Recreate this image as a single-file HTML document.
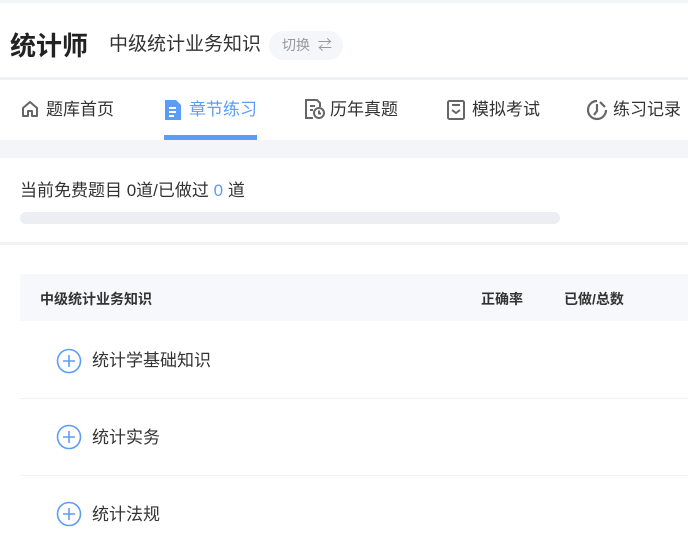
<!DOCTYPE html>
<html><head><meta charset="utf-8"><style>
*{margin:0;padding:0;box-sizing:border-box}
body{width:688px;height:542px;overflow:hidden;background:#fff;font-family:"Liberation Sans","Noto Sans CJK SC",sans-serif;color:#333;position:relative}
.a{position:absolute;white-space:nowrap}
</style></head><body>
<div class="a" style="left:0;top:0;width:688px;height:3px;background:#f4f5f8"></div>
<div class="a" style="left:10px;top:28px;font-size:26px;font-weight:bold;color:#222;line-height:36px">统计师</div>
<div class="a" style="left:109px;top:32px;font-size:19px;color:#333;line-height:26px">中级统计业务知识</div>
<div class="a" style="left:269px;top:31px;width:74px;height:29px;border-radius:15px;background:#f5f6fa;font-size:14px;color:#999;line-height:29px;padding-left:13px">切换 <span style="margin-left:4px">⇄</span></div>
<div class="a" style="left:0;top:77px;width:688px;height:3px;background:#f1f2f6"></div>
<svg class="a" style="left:20px;top:99px" width="20" height="20" viewBox="0 0 20 20" fill="none" stroke="#666" stroke-width="2"><path d="M3 9 L10 3 L17 9 V17 H12 V12 H8 V17 H3 Z" stroke-linejoin="round"/></svg>
<div class="a" style="left:46px;top:98px;font-size:17px;color:#333;line-height:24px">题库首页</div>
<svg class="a" style="left:163px;top:99px" width="20" height="22" viewBox="0 0 20 22"><path d="M2 1 H13 L18 6 V21 H2 Z" fill="#5b9cf7"/><path d="M6 9h7M6 13h7M6 17h5" stroke="#fff" stroke-width="2"/></svg>
<div class="a" style="left:189px;top:98px;font-size:17px;color:#5b9cf7;line-height:24px">章节练习</div>
<div class="a" style="left:164px;top:135px;width:93px;height:5px;background:#5b9cf7"></div>
<svg class="a" style="left:304px;top:98px" width="22" height="22" viewBox="0 0 22 22" fill="none" stroke="#666" stroke-width="2"><path d="M9 20 H2 V2 H13 L16 5 V9"/><path d="M6 8h5M6 12h3"/><circle cx="15" cy="15" r="5"/><path d="M15 12.5v3h2"/></svg>
<div class="a" style="left:330px;top:98px;font-size:17px;color:#333;line-height:24px">历年真题</div>
<svg class="a" style="left:446px;top:99px" width="20" height="22" viewBox="0 0 20 22" fill="none" stroke="#666" stroke-width="2"><rect x="2" y="2" width="16" height="18" rx="1.5"/><path d="M6 6h8M6 11l4 3 4-3"/></svg>
<div class="a" style="left:472px;top:98px;font-size:17px;color:#333;line-height:24px">模拟考试</div>
<svg class="a" style="left:586px;top:99px" width="22" height="22" viewBox="0 0 22 22" fill="none" stroke="#666" stroke-width="2.2"><path d="M11 2 A9 9 0 1 0 20 11"/><path d="M11 5 V12 L8 16"/><path d="M14 3 L19 8"/></svg>
<div class="a" style="left:613px;top:98px;font-size:17px;color:#333;line-height:24px">练习记录</div>
<div class="a" style="left:0;top:140px;width:688px;height:18px;background:#f4f5f8"></div>
<div class="a" style="left:20px;top:180px;font-size:17px;color:#333;line-height:22px">当前免费题目 0道/已做过 <span style="color:#5b9cf7">0</span> 道</div>
<div class="a" style="left:20px;top:212px;width:540px;height:12px;border-radius:6px;background:#eceef4"></div>
<div class="a" style="left:0;top:242px;width:688px;height:3px;background:#f1f2f6"></div>
<div class="a" style="left:20px;top:274px;width:668px;height:47px;background:#f7f8fb"></div>
<div class="a" style="left:40px;top:290px;font-size:14px;font-weight:bold;color:#333;line-height:18px">中级统计业务知识</div>
<div class="a" style="left:481px;top:290px;font-size:14px;font-weight:bold;color:#333;line-height:18px">正确率</div>
<div class="a" style="left:564px;top:290px;font-size:14px;font-weight:bold;color:#333;line-height:18px">已做/总数</div>
<div class="a" style="left:20px;top:398px;width:668px;height:1px;background:#f0f1f4"></div>
<div class="a" style="left:20px;top:475px;width:668px;height:1px;background:#f0f1f4"></div>
<svg class="a" style="left:56px;top:348px" width="26" height="26" viewBox="0 0 26 26" fill="none" stroke="#5b9cf7" stroke-width="1.6"><circle cx="13" cy="13" r="11.5"/><path d="M13 7v12M7 13h12"/></svg>
<div class="a" style="left:92px;top:349px;font-size:17px;color:#333;line-height:24px">统计学基础知识</div>
<svg class="a" style="left:56px;top:424px" width="26" height="26" viewBox="0 0 26 26" fill="none" stroke="#5b9cf7" stroke-width="1.6"><circle cx="13" cy="13" r="11.5"/><path d="M13 7v12M7 13h12"/></svg>
<div class="a" style="left:92px;top:426px;font-size:17px;color:#333;line-height:24px">统计实务</div>
<svg class="a" style="left:56px;top:501px" width="26" height="26" viewBox="0 0 26 26" fill="none" stroke="#5b9cf7" stroke-width="1.6"><circle cx="13" cy="13" r="11.5"/><path d="M13 7v12M7 13h12"/></svg>
<div class="a" style="left:92px;top:503px;font-size:17px;color:#333;line-height:24px">统计法规</div>
</body></html>
